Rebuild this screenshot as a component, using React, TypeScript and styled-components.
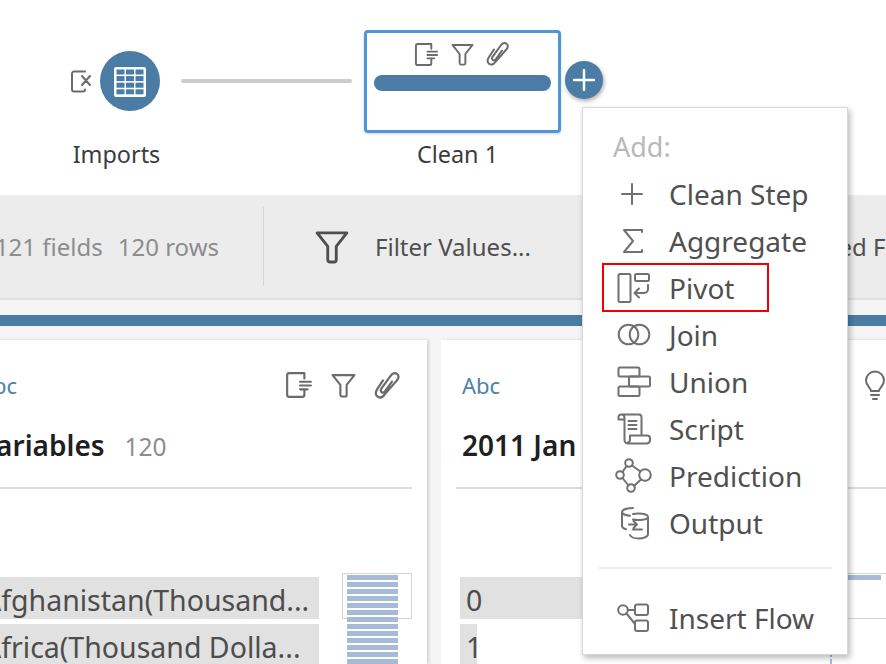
import React from 'react'
import styled, { createGlobalStyle } from 'styled-components'

const Global = createGlobalStyle`
  html, body { margin: 0; padding: 0; background: #fff; }
  body { font-family: "Noto Sans", "Open Sans", sans-serif; color: #333; }
`

const Page = styled.div`
  position: relative;
  width: 886px;
  height: 664px;
  overflow: hidden;
  background: #fff;
`

/* flow canvas */
const FlowCanvas = styled.div`
  position: relative;
  height: 195px;
`
const RemoveIcon = styled.svg`
  position: absolute;
  left: 70px;
  top: 69px;
  width: 24px;
  height: 24px;
`
const InputNode = styled.div`
  position: absolute;
  left: 100px;
  top: 51px;
  width: 60px;
  height: 60px;
  border-radius: 50%;
  background: #4a7ca6;
  display: flex;
  align-items: center;
  justify-content: center;
`
const Connector = styled.div`
  position: absolute;
  left: 181px;
  top: 79px;
  width: 171px;
  height: 4px;
  border-radius: 2px;
  background: #cdcdcd;
`
const StepNode = styled.div`
  position: absolute;
  left: 364px;
  top: 30px;
  width: 197px;
  height: 103px;
  box-sizing: border-box;
  border: 3px solid #4f97d9;
  border-radius: 4px;
  box-shadow: 0 1px 3px rgba(0, 0, 0, 0.18);
  padding: 9px 7px 0;
  display: flex;
  flex-direction: column;
  align-items: center;
  background: #fff;
`
const NodeIcons = styled.div`
  display: flex;
  gap: 12px;
  height: 24px;
  align-items: center;
  color: #6b6b6b;
  margin-left: -2px;
`
const StepBar = styled.div`
  margin-top: 9px;
  align-self: stretch;
  height: 16px;
  border-radius: 8px;
  background: #4a7ca6;
`
const AddButton = styled.div`
  position: absolute;
  left: 565px;
  top: 61px;
  width: 38px;
  height: 38px;
  border-radius: 50%;
  background: #4a7ca6;
  box-shadow: 1px 2px 4px rgba(0, 0, 0, 0.35);
  display: flex;
  align-items: center;
  justify-content: center;
`
const NodeLabel = styled.div<{ $center: number }>`
  position: absolute;
  left: ${p => p.$center - 100}px;
  top: 139px;
  width: 200px;
  text-align: center;
  font-size: 23.4px;
  line-height: 30px;
  color: #3c3c3c;
`

/* summary toolbar */
const Toolbar = styled.div`
  height: 103px;
  background: #ececec;
  border-bottom: 2px solid #e0e0e0;
  display: flex;
  align-items: center;
  margin-left: -15px;
  white-space: nowrap;
  overflow: hidden;
`
const Stats = styled.div`
  width: 278px;
  flex: none;
  box-sizing: border-box;
  padding-right: 44px;
  text-align: right;
  font-size: 24px;
  color: #8d8d8d;
  span { margin-left: 15px; }
`
const ToolDivider = styled.div`
  width: 1px;
  height: 79px;
  background: #d6d6d6;
  flex: none;
`
const FilterAction = styled.div`
  display: flex;
  align-items: center;
  gap: 26px;
  margin-left: 51px;
  font-size: 24px;
  color: #4f4f4f;
  flex: none;
`
const MoreAction = styled.div`
  font-size: 24px;
  color: #4f4f4f;
  margin-left: 218px;
  flex: none;
`

/* progress strip */
const Strip = styled.div`
  background: #f5f5f5;
  padding: 15px 0 14px;
`
const StripBar = styled.div`
  height: 11px;
  background: #4a7ca6;
`

/* profile cards */
const Cards = styled.div`
  display: flex;
  gap: 14px;
  margin-left: -42px;
  background: #f5f5f5;
  height: 324px;
`
const Card = styled.div`
  flex: none;
  width: 469px;
  box-sizing: border-box;
  background: #fff;
  padding: 0 15px;
  box-shadow: 2px 0 3px rgba(0, 0, 0, 0.14);
`
const CardTop = styled.div`
  height: 46px;
  padding-top: 22px;
  display: flex;
  align-items: center;
  justify-content: space-between;
`
const TypeTag = styled.div`
  font-size: 22px;
  color: #4d83a8;
  margin-left: 6px;
`
const CardIcons = styled.div`
  display: flex;
  gap: 18px;
  margin-right: 11px;
  color: #6b6b6b;
  align-items: center;
`
const CardTitle = styled.div`
  display: flex;
  align-items: baseline;
  gap: 20px;
  height: 81px;
  padding: 20px 0 0 6px;
  box-sizing: border-box;
  border-bottom: 2px solid #dcdcdc;
  white-space: nowrap;
  font-size: 28px;
  font-weight: 600;
  color: #1f1f1f;
  line-height: 34px;
`
const TitleCount = styled.span`
  font-size: 24.5px;
  font-weight: 400;
  color: #8d8d8d;
`
const CardBody = styled.div`
  display: flex;
  justify-content: space-between;
  padding-top: 88px;
`
const Values = styled.div`
  display: flex;
  flex-direction: column;
  gap: 5px;
  width: 342px;
  margin-left: 4px;
`
const ValueRow = styled.div<{ $fill: number }>`
  height: 42px;
  padding-left: 6px;
  font-size: 28.5px;
  line-height: 46px;
  color: #4d4d4d;
  white-space: nowrap;
  background: linear-gradient(#e1e1e1, #e1e1e1) no-repeat left / ${p => p.$fill}% 100%;
`
const Histogram = styled.div`
  flex: none;
  width: 70px;
  height: 46px;
  margin-top: -4px;
  box-sizing: border-box;
  border: 1px solid #d4d4d4;
  padding: 1px 0 0 4px;
`
const HistBars = styled.div`
  display: flex;
  flex-direction: column;
  gap: 2px;
`
const HistBar = styled.div<{ $w: number }>`
  width: ${p => p.$w}px;
  height: 5px;
  flex: none;
  background: #a5bbd6;
`

/* add menu */
const Menu = styled.div`
  position: absolute;
  left: 582px;
  top: 107px;
  width: 266px;
  height: 548px;
  box-sizing: border-box;
  background: #fff;
  border: 1px solid #d8d8d8;
  box-shadow: 2px 3px 6px rgba(0, 0, 0, 0.28);
  padding: 20px 15px 0 16px;
`
const MenuHeading = styled.div`
  font-size: 27px;
  line-height: 38px;
  height: 42px;
  margin-left: 14px;
  color: #b9b9b9;
`
const MenuItem = styled.div<{ $marked?: boolean }>`
  position: relative;
  height: 47px;
  display: flex;
  align-items: center;
  font-size: 28px;
  color: #505050;
  white-space: nowrap;
  ${p => p.$marked && `
    &::after {
      content: '';
      position: absolute;
      left: 3px;
      top: -1px;
      width: 167px;
      height: 49px;
      box-sizing: border-box;
      border: 2px solid #f00000;
    }
  `}
`
const MenuIconSlot = styled.div`
  width: 70px;
  flex: none;
  padding-left: 18px;
  box-sizing: border-box;
  display: flex;
  align-items: center;
  color: #717171;
`
const MenuDivider = styled.div`
  height: 2px;
  background: #ececec;
  margin: 21px 0 25px;
`

const Hint = styled.svg`
  position: absolute;
  left: 863px;
  top: 370px;
  width: 24px;
  height: 32px;
  color: #6b6b6b;
`

type IconProps = { size?: number }
const base = { fill: 'none', stroke: 'currentColor', strokeWidth: 2, strokeLinecap: 'round' as const, strokeLinejoin: 'round' as const }

const DocIcon = ({ size = 26 }: IconProps) => (
  <svg width={size} height={size} viewBox="0 0 26 26" {...base}>
    <path d="M18 2H4a2 2 0 0 0-2 2v18a2 2 0 0 0 2 2h12a2 2 0 0 0 2-2v-4M18 2v5M14 10h10M14 13.500h10M14 17h7" />
  </svg>
)
const FunnelIcon = ({ size = 24 }: IconProps) => (
  <svg width={size} height={size} viewBox="0 0 24 24" {...base}>
    <path d="M1.500 2h21l-7.500 9.500V21a1.600 1.600 0 0 1-1.600 1.600h-3A1.600 1.600 0 0 1 9 21v-9.500z" />
  </svg>
)
const ClipIcon = ({ size = 24 }: IconProps) => (
  <svg width={size} height={size} viewBox="0 0 24 24" {...base}>
    <path d="M8 7.500l-5 7.500c-2 3-1.800 5.800.4 7 2.200 1.300 4.500.2 6.100-2.200L20.800 7c1.500-2.400 1.200-4.500-.6-5.500-1.900-1-3.900-.2-5.300 1.800L6.500 14.800c-.8 1.300-.6 2.600.4 3.200 1 .6 2.200.2 3-1L16 8.500" />
  </svg>
)

const menuItems: { label: string; icon: React.ReactNode; marked?: boolean }[] = [
  {
    label: 'Clean Step',
    icon: (
      <svg width="22" height="22" viewBox="0 0 22 22" {...base} style={{ marginLeft: 4 }}>
        <path d="M11 1v20M1 11h20" />
      </svg>
    ),
  },
  {
    label: 'Aggregate',
    icon: (
      <svg width="22" height="26" viewBox="0 0 22 26" {...base} style={{ marginLeft: 5 }}>
        <path d="M20 4V2H2l9 11-9 11h18v-2" />
      </svg>
    ),
  },
  {
    label: 'Pivot',
    marked: true,
    icon: (
      <svg width="34" height="32" viewBox="0 0 34 32" {...base}>
        <rect x="1.500" y="2" width="12" height="28" rx="1.500" />
        <rect x="18" y="2" width="14" height="7" rx="1.500" />
        <path d="M31 13v4a4 4 0 0 1-4 4h-9M22 16.500L17.500 21l4.500 4.500" />
      </svg>
    ),
  },
  {
    label: 'Join',
    icon: (
      <svg width="34" height="23" viewBox="0 0 34 23" {...base}>
        <circle cx="11.500" cy="11.500" r="9.800" />
        <circle cx="22.500" cy="11.500" r="9.800" />
      </svg>
    ),
  },
  {
    label: 'Union',
    icon: (
      <svg width="34" height="32" viewBox="0 0 34 32" {...base}>
        <rect x="1.500" y="1.500" width="21" height="9" rx="1.500" />
        <rect x="12" y="10.500" width="21" height="10" rx="1.500" />
        <rect x="1.500" y="20.500" width="21" height="9.500" rx="1.500" />
      </svg>
    ),
  },
  {
    label: 'Script',
    icon: (
      <svg width="34" height="32" viewBox="0 0 34 32" {...base}>
        <path d="M1.500 4a2.500 2.500 0 0 1 2.500-2.500h18a2.500 2.500 0 0 1 2.500 2.500v18M4 1.500A3 3 0 0 1 7.500 4.500V27a3.500 3.500 0 0 0 3.500 3.500h19a3.500 3.500 0 0 0 3-3.500v-1.500a3 3 0 0 0-3-3H13v4a3.500 3.500 0 0 1-3 3.500M1.500 4v2.500h5M11.500 8h8M11.500 12h8M11.500 16h8" />
      </svg>
    ),
  },
  {
    label: 'Prediction',
    icon: (
      <svg width="38" height="35" viewBox="0 0 38 35" {...base} style={{ marginLeft: -2 }}>
        <circle cx="14" cy="5" r="3.800" />
        <circle cx="5" cy="17" r="3.800" />
        <circle cx="30" cy="17" r="5.800" />
        <circle cx="16" cy="30" r="3.800" />
        <path d="M17 7.500l8.500 6M11.500 8L7.500 14M7.500 20l6 7.500M26 21.500l-7 6.500" />
      </svg>
    ),
  },
  {
    label: 'Output',
    icon: (
      <svg width="34" height="34" viewBox="0 0 34 34" {...base} style={{ marginLeft: 2 }}>
        <path d="M14 2C9 2 3 3.500 3 6v14c0 1.500 1.500 2.500 4 3.300M3 6c0 2 4 3.500 8 3.800" />
        <path d="M14 8c5-1 15-.5 15 3v17c0 3-5 4.500-9 4.500-4 0-8-1-9-3.500M14 13.500c5 1 15 .5 15-2.500" />
        <path d="M10 18.500h7.500M14.500 15l3.500 3.500-3.500 3.500M23 23.500h-9" />
      </svg>
    ),
  },
]

const Stripes = ({ first, rest, count }: { first: number; rest: number; count: number }) => (
  <HistBars>
    {Array.from({ length: count }, (_, i) => <HistBar key={i} $w={i === 0 ? first : rest} />)}
  </HistBars>
)

export default function App() {
  return (
    <Page>
      <Global />
      <FlowCanvas>
        <RemoveIcon viewBox="0 0 24 24" {...base} color="#6b6b6b">
          <path d="M15 2.500H4a2 2 0 0 0-2 2v16a2 2 0 0 0 2 2h9a2 2 0 0 0 2-2M12 7l8 9M20 7l-8 9" />
        </RemoveIcon>
        <InputNode>
          <svg width="34" height="32" viewBox="0 0 34 32" style={{ marginTop: 2 }}>
            <rect x="1" y="1" width="32" height="30" rx="2" fill="#fff" />
            {[0, 1, 2, 3].map(r => [0, 1, 2].map(c => (
              <rect key={`${r}-${c}`} x={3.500 + c * 9.500} y={3.500 + r * 6.600} width="8" height="5" fill="#4a7ca6" />
            )))}
          </svg>
        </InputNode>
        <NodeLabel $center={116.500}>Imports</NodeLabel>
        <Connector />
        <StepNode>
          <NodeIcons>
            <DocIcon size={25} />
            <FunnelIcon size={23} />
            <ClipIcon size={24} />
          </NodeIcons>
          <StepBar />
        </StepNode>
        <NodeLabel $center={457.500}>Clean 1</NodeLabel>
        <AddButton>
          <svg width="22" height="22" viewBox="0 0 22 22" fill="none" stroke="#fff" strokeWidth="2.500" strokeLinecap="round">
            <path d="M11 1v20M1 11h20" />
          </svg>
        </AddButton>
      </FlowCanvas>

      <Toolbar>
        <Stats>121 fields<span>120 rows</span></Stats>
        <ToolDivider />
        <FilterAction>
          <FunnelIcon size={34} />
          Filter Values...
        </FilterAction>
        <MoreAction>Calculated Field</MoreAction>
      </Toolbar>

      <Strip><StripBar /></Strip>

      <Cards>
        <Card>
          <CardTop>
            <TypeTag>Abc</TypeTag>
            <CardIcons>
              <DocIcon size={28} />
              <FunnelIcon size={25} />
              <ClipIcon size={27} />
            </CardIcons>
          </CardTop>
          <CardTitle>Variables<TitleCount>120</TitleCount></CardTitle>
          <CardBody>
            <Values>
              <ValueRow $fill={100}>Afghanistan(Thousand...</ValueRow>
              <ValueRow $fill={100}>Africa(Thousand Dolla...</ValueRow>
            </Values>
            <Histogram>
              <Stripes first={51} rest={51} count={14} />
            </Histogram>
          </CardBody>
        </Card>
        <Card>
          <CardTop>
            <TypeTag>Abc</TypeTag>
          </CardTop>
          <CardTitle>2011 Jan</CardTitle>
          <CardBody>
            <Values>
              <ValueRow $fill={100}>0</ValueRow>
              <ValueRow $fill={5}>1</ValueRow>
            </Values>
            <Histogram>
              <Stripes first={51} rest={2} count={14} />
            </Histogram>
          </CardBody>
        </Card>
      </Cards>

      <Hint viewBox="0 0 24 32" {...base}>
        <path d="M8 21c0-3-5-5-5-10.500a9 9 0 0 1 18 0C21 16 16 18 16 21zM8 25h8M10 29h4" />
      </Hint>

      <Menu>
        <MenuHeading>Add:</MenuHeading>
        {menuItems.map(item => (
          <MenuItem key={item.label} $marked={item.marked}>
            <MenuIconSlot>{item.icon}</MenuIconSlot>
            {item.label}
          </MenuItem>
        ))}
        <MenuDivider />
        <MenuItem>
          <MenuIconSlot>
            <svg width="32" height="29" viewBox="0 0 32 29" {...base}>
              <circle cx="6" cy="7" r="4.800" />
              <rect x="18" y="1.500" width="13" height="10.500" rx="2" />
              <rect x="18" y="17.500" width="13" height="10.500" rx="2" />
              <path d="M10.800 7H18M9.500 10.500L18 21" />
            </svg>
          </MenuIconSlot>
          Insert Flow
        </MenuItem>
      </Menu>
    </Page>
  )
}
